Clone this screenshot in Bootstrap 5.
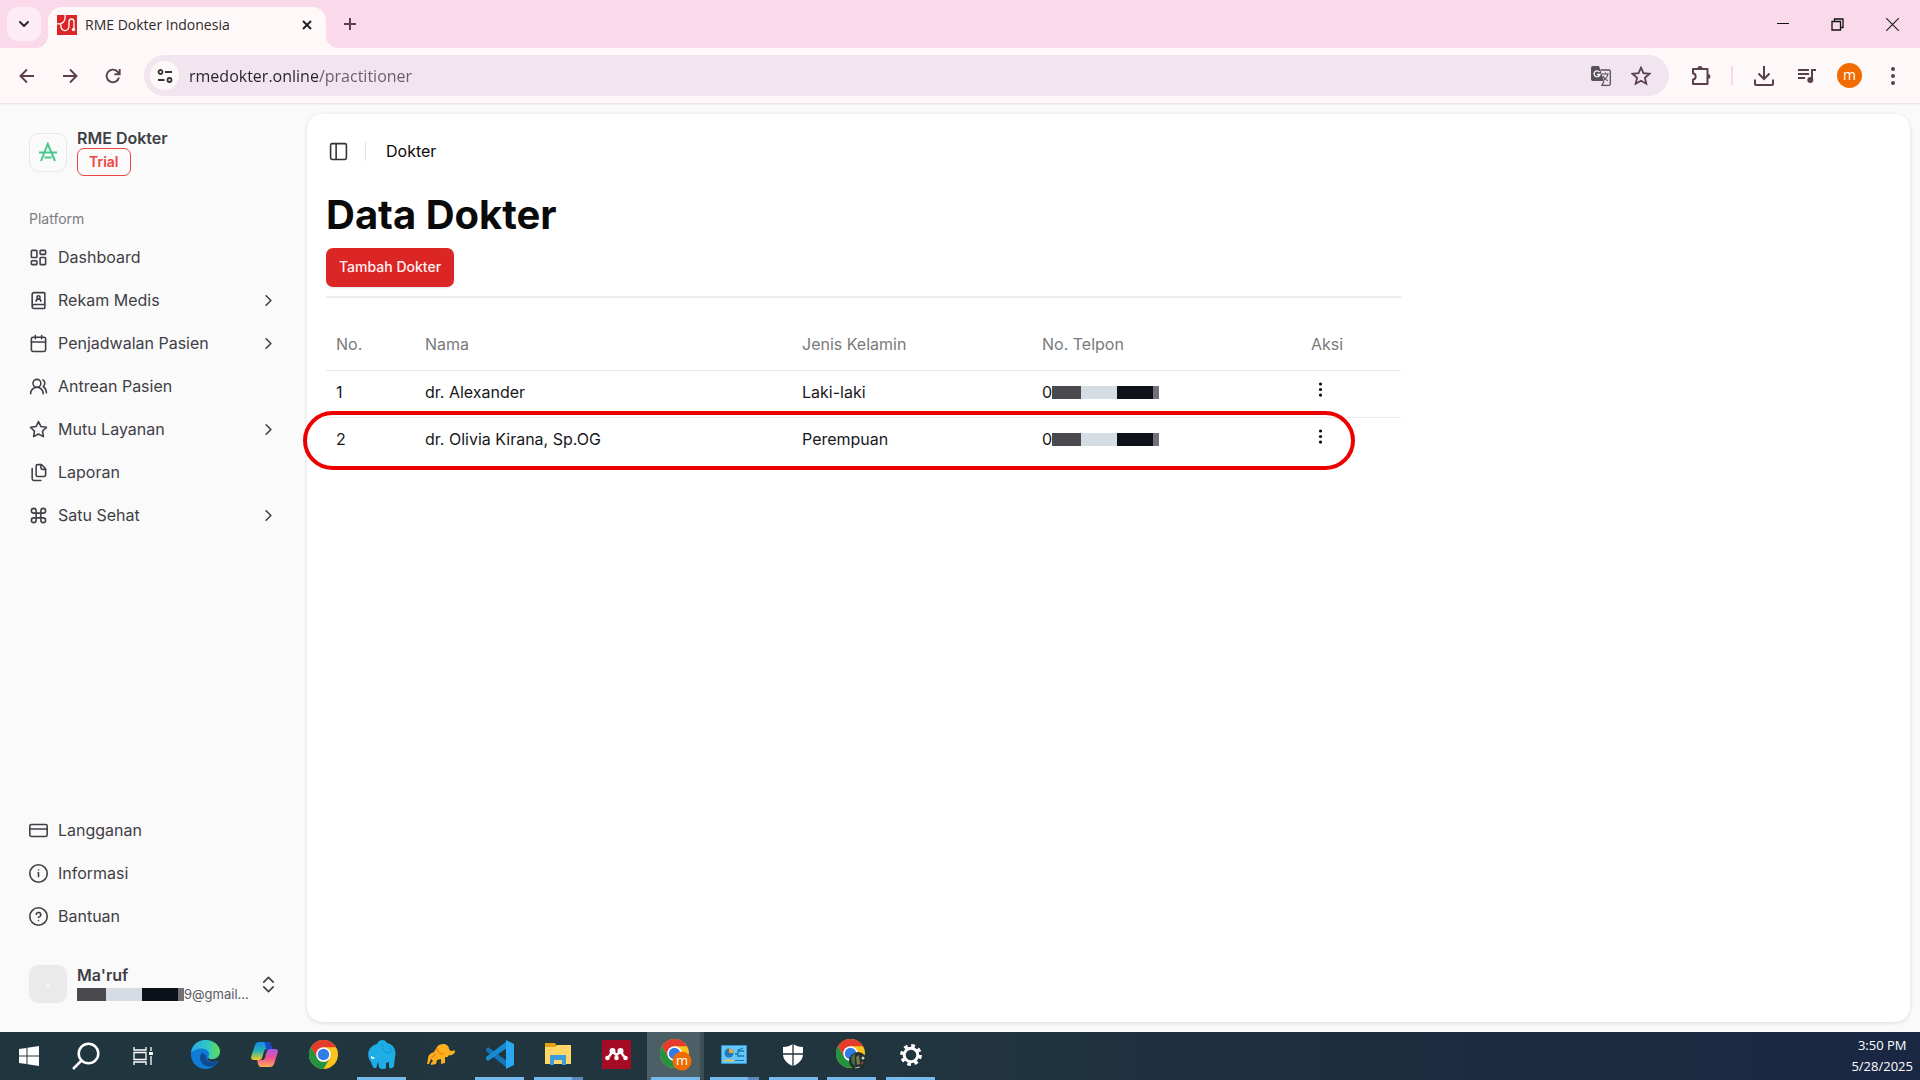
<!DOCTYPE html>
<html lang="id">
<head>
<meta charset="utf-8">
<meta name="viewport" content="width=device-width, initial-scale=1">
<title>RME Dokter Indonesia</title>
<link href="https://cdn.jsdelivr.net/npm/bootstrap@5.3.0/dist/css/bootstrap.min.css" rel="stylesheet">
<style>
  :root { --ui: "Open Sans", "Noto Sans", sans-serif; --app: Inter, "Liberation Sans", sans-serif; --fg: #3f3f46; --plum: #59404f; }
  body { font-family: var(--app); font-size: 16px; line-height: 24px; color: #0a0a0a; background: #fafafa; }
  svg { display: block; flex: none; }
  button { border: 0; background: none; padding: 0; color: inherit; }
  a { color: inherit; text-decoration: none; }
  .ln { fill: none; stroke: currentColor; stroke-width: 2; stroke-linecap: round; stroke-linejoin: round; }

  /* browser window */
  .tabstrip { height: 48px; background: #fadaea; padding: 7px 0 0 7px; color: #2b2b2b; font-family: var(--ui); }
  .tab-search { width: 34px; height: 34px; border-radius: 11px; background: #feecf5; }
  .win-tab { width: 278px; height: 41px; margin-left: 7px; padding: 0 12px 6px 9px; border-radius: 14px 14px 0 0; background: #fff8f8; font-size: 14px; position: relative; }
  .win-tab::before, .win-tab::after { content: ""; position: absolute; bottom: 0; width: 12px; height: 12px; }
  .win-tab::before { left: -12px; background: radial-gradient(circle at 0 0, transparent 12px, #fff8f8 12px); }
  .win-tab::after { right: -12px; background: radial-gradient(circle at 100% 0, transparent 12px, #fff8f8 12px); }
  .win-btn { width: 55px; height: 34px; }
  .toolbar { height: 56px; background: #fff8f8; border-bottom: 1px solid #f1e2ea; color: var(--plum); padding: 0 6px 0 5px; box-shadow: 0 1px 0 #f6f1f4; }
  .tool-btn { width: 43px; height: 40px; color: var(--plum); }
  .omnibox { height: 41px; border-radius: 21px; background: #f1e5ef; padding: 0 14px 0 6px; margin: 0 10px; }
  .site-info { width: 29px; height: 29px; border-radius: 50%; background: #fff8f8; color: #333; }
  .address { border: 0; outline: 0; font: 16px/24px var(--ui); margin-left: 10px; padding: 0; color: transparent; background: linear-gradient(90deg, #28212a 129px, #6b5c68 129px); -webkit-background-clip: text; background-clip: text; }
  .tool-rule { width: 2px; height: 19px; background: #ffd5ea; margin: 0 9px; }
  .profile { width: 25px; height: 25px; border-radius: 50%; background: #f06c00; color: #fff; font: 14px/24px var(--ui); }

  /* application shell */
  .side { width: 307px; padding: 24px 19px 29px; color: var(--fg); }
  .side-row { padding: 0 10px; gap: 10px; }
  .side-link { height: 38px; padding: 0 10px; gap: 10px; color: var(--fg); }
  .side-link:hover { color: #18181b; }
  .side-nav { gap: 5px; }
  .side-foot { margin-bottom: 30px; }
  .logo-box { width: 38px; height: 39px; border: 1px solid #e8e8ea; border-radius: 10px; }
  .trial { border: 1px solid #ef4444; border-radius: 7px; color: #ef4444; font-size: 14px; line-height: 26px; font-weight: 600; padding: 0 11px; }
  .group-title { color: #7c7c82; font-size: 14px; line-height: 38px; padding: 0 10px; margin-top: 24px; }
  .face { width: 38px; height: 38px; border-radius: 10px; background: #eaeaea; color: #f4f4f4; }
  .mail { font-size: 13px; line-height: 18px; color: #5c5c64; }
  .redact { width: 107px; height: 13px; background: linear-gradient(90deg, #4a4a4e 0 27%, #d5dce4 27% 61%, #0d111a 61% 94%, #717177 94%); }
  .sheet { background: #fff; border-radius: 15px; margin: 10px 10px 10px 0; padding: 17px 19px; box-shadow: 0 1px 4px rgba(0,0,0,.13); }
  .crumb-btn { margin-left: 3px; color: #333; }
  .crumb-rule { width: 1px; height: 19px; background: #e5e5e5; margin: 0 20px 0 17px; }
  .page-title { font-size: 40px; line-height: 48px; font-weight: 700; margin: 20px 0 9px; }
  .btn-add { background: #dc2626; color: #fff1f1; font-size: 14px; line-height: 20px; font-weight: 500; border: 0; border-radius: 7px; padding: 9px 13px 10px; box-shadow: 0 1px 2px rgba(0,0,0,.12); }
  .btn-add:hover { background: #c32020; color: #fff; }
  .content { max-width: 1075px; }
  .rule { border-top: 2px solid #ededee; margin: 9px 0 24px; }
  .doctors { table-layout: fixed; font-size: 16px; line-height: 22px; margin: 0; --bs-table-color: #18181b; --bs-table-bg: transparent; }
  .doctors th { font-weight: 400; color: #7a7a7a; height: 48px; padding: 0 10px 3px; border-bottom: 1px solid #e8e8e8; vertical-align: middle; }
  .doctors td { height: 47px; padding: 0 10px 3px; border-bottom: 1px solid #ebebeb; vertical-align: middle; }
  .doctors tr:last-child td { border-bottom: 0; }
  .w-no { width: 89px; } .w-name { width: 377px; } .w-sex { width: 240px; } .w-tel { width: 269px; }
  .ring { position: absolute; left: -23px; right: 46px; bottom: -6px; height: 59px; border: 4px solid #ec0000; border-radius: 30px; pointer-events: none; }

  /* desktop taskbar */
  .taskbar { height: 48px; background: linear-gradient(90deg, #20363e, #21353f 45%, #1c2b40 80%, #1a2743); color: #fff; font-family: var(--ui); gap: 10px; }
  .sys-btn { width: 57px; height: 48px; }
  .apps { width: 754px; }
  .app-btn { width: 49px; height: 48px; border-bottom: 3px solid transparent; position: relative; }
  .running { border-bottom-color: #76b9ed; }
  .stacked::after { content: ""; position: absolute; right: 0; bottom: -3px; width: 11px; height: 3px; background: #5a8db5; }
  .active-app { background: #4c5f66; box-shadow: -4px 0 0 #4c5f66, 4px 0 0 #3c4f57; }
  .clock { font-size: 13px; line-height: 21px; margin-right: 7px; text-align: center; }
</style>
<script src="https://cdn.jsdelivr.net/npm/bootstrap@5.3.0/dist/js/bootstrap.bundle.min.js"></script>
</head>
<body class="vh-100 d-flex flex-column overflow-hidden">

<svg width="0" height="0" class="position-absolute" aria-hidden="true">
  <defs>
    <symbol id="chev" viewBox="0 0 24 24"><path class="ln" d="m9 18 6-6-6-6"/></symbol>
    <symbol id="dots" viewBox="0 0 24 24"><circle cx="12" cy="5" r="2"/><circle cx="12" cy="12" r="2"/><circle cx="12" cy="19" r="2"/></symbol>
    <symbol id="chrome" viewBox="0 0 48 48">
      <circle cx="24" cy="24" r="24" fill="#fcc31e"/>
      <path d="M24 12H44.8A24 24 0 0 0 3.2 12L13.6 30z" fill="#e33b2e"/>
      <path d="M3.2 12A24 24 0 0 0 24 48L34.4 30A12 12 0 0 1 13.6 30z" fill="#229342"/>
      <circle cx="24" cy="24" r="12" fill="#fff"/><circle cx="24" cy="24" r="9.5" fill="#2f7de9"/>
    </symbol>
  </defs>
</svg>

<header>
  <div class="tabstrip d-flex align-items-start">
    <button class="tab-search d-flex align-items-center justify-content-center" aria-label="Search tabs"><svg width="16" height="16" viewBox="0 0 16 16"><path class="ln" d="m4 6 4 4 4-4"/></svg></button>
    <div class="win-tab d-flex align-items-center">
      <svg width="20" height="20" viewBox="0 0 20 20"><path fill="#dc2626" d="M0 0h20v20H0z"/><path d="M0 8.500c5 1.500 9-2 8-8.500M4 8.500c-1 9 8 9 8 2.500V7c0-4 5-4 5 0v6" fill="none" stroke="#fff" stroke-width="1.300"/><circle cx="16.500" cy="14.500" r="1.700" fill="#fff"/></svg>
      <span class="ms-2 me-auto">RME Dokter Indonesia</span>
      <button aria-label="Close tab"><svg width="14" height="14" viewBox="0 0 14 14"><path d="m3 3 8 8m0-8-8 8" stroke="#222" stroke-width="2"/></svg></button>
    </div>
    <button class="mt-2 ms-3" aria-label="New tab"><svg width="16" height="18" viewBox="0 0 16 18"><path d="M8 3v12M2 9h12" stroke="#59404f" stroke-width="2"/></svg></button>
    <div class="ms-auto d-flex text-black">
      <button class="win-btn d-flex align-items-center justify-content-center" aria-label="Minimize"><svg width="12" height="12"><path d="M0 5.500h12" stroke="#111"/></svg></button>
      <button class="win-btn d-flex align-items-center justify-content-center" aria-label="Restore"><svg width="13" height="13" fill="none" stroke="#111" stroke-width="1.300"><path d="M1 3.500h8.500V12H1zM3.500 3.500V1H12v8.500H9.500"/></svg></button>
      <button class="win-btn d-flex align-items-center justify-content-center" aria-label="Close"><svg width="13" height="13"><path d="m0 0 13 13m0-13L0 13" stroke="#222" stroke-width="1.200"/></svg></button>
    </div>
  </div>
  <div class="toolbar d-flex align-items-center">
    <button class="tool-btn d-flex align-items-center justify-content-center" aria-label="Back"><svg width="16" height="16" viewBox="0 0 16 16" fill="none" stroke="currentColor" stroke-width="1.900"><path d="M15 8H2M8 1.500 1.500 8 8 14.500"/></svg></button>
    <button class="tool-btn d-flex align-items-center justify-content-center" aria-label="Forward"><svg width="16" height="16" viewBox="0 0 16 16" fill="none" stroke="currentColor" stroke-width="1.900"><path d="M1 8h13M8 1.500 14.500 8 8 14.500"/></svg></button>
    <button class="tool-btn d-flex align-items-center justify-content-center" aria-label="Reload"><svg width="16" height="16" viewBox="0 0 16 16" fill="none" stroke="currentColor" stroke-width="1.900"><path d="M14 9.500A6.300 6.300 0 1 1 12.500 3.600L14.500 6M14.700 1v5.300H9.500"/></svg></button>
    <div class="omnibox d-flex align-items-center flex-grow-1">
      <button class="site-info d-flex align-items-center justify-content-center" aria-label="Site information"><svg width="16" height="16" viewBox="0 0 16 16" fill="none" stroke="currentColor" stroke-width="1.800"><circle cx="3.500" cy="4" r="2"/><path d="M8 4h7M1 12h6.500"/><circle cx="12.500" cy="12" r="2"/></svg></button>
      <input class="address flex-grow-1" type="text" aria-label="Address" value="rmedokter.online/practitioner">
      <button class="me-3" aria-label="Translate"><svg width="20" height="20" viewBox="0 0 20 20"><path d="M2 0h6l5 15H2a2 2 0 0 1-2-2V2a2 2 0 0 1 2-2z" fill="#59505a"/><path d="M8.500 6A3 3 0 1 0 9 8.500H6" fill="none" stroke="#fff" stroke-width="1.300"/><path d="M9.500 4H18a1.300 1.300 0 0 1 1.300 1.300V18a1.300 1.300 0 0 1-1.300 1.300h-7l2-4" fill="none" stroke="#59505a" stroke-width="1.300"/><path d="M11 8h7m-3.500-1.500V8m2 0c0 3-2 5-3.500 6m-1-4c1 2 3 4 5 4.500" fill="none" stroke="#59505a" stroke-width="1.100"/></svg></button>
      <button class="mx-1" aria-label="Bookmark"><svg width="20" height="20" viewBox="0 0 18 18"><path d="m9 1.500 2.200 5 5.500.5-4.200 3.600 1.300 5.400L9 13.200 4.200 16l1.300-5.400L1.300 7l5.500-.5z" fill="none" stroke="#59404f" stroke-width="1.600"/></svg></button>
    </div>
    <button class="tool-btn d-flex align-items-center justify-content-center" aria-label="Extensions"><svg width="22" height="22" viewBox="0 0 22 22"><path d="M3 4h14.500v15H3v-4.500c3.500 0 3.500-6 0-6z" fill="none" stroke="currentColor" stroke-width="2" stroke-linejoin="round"/><path d="M7.500 3.500a2.500 2.500 0 0 1 5 0M18 9a2.500 2.500 0 0 1 0 5" fill="currentColor"/></svg></button>
    <span class="tool-rule"></span>
    <button class="tool-btn d-flex align-items-center justify-content-center" aria-label="Downloads"><svg width="20" height="20" viewBox="0 0 20 20" fill="none" stroke="currentColor" stroke-width="2"><path d="M10 0v12.500M4.500 7.500l5.500 5.500 5.500-5.500M1 13.500V18a1 1 0 0 0 1 1h16a1 1 0 0 0 1-1v-4.500"/></svg></button>
    <button class="tool-btn d-flex align-items-center justify-content-center" aria-label="Media controls"><svg width="20" height="16" viewBox="0 0 20 16"><path d="M1 2h11M1 6h11M1 10h7M15 12V2h4" fill="none" stroke="currentColor" stroke-width="2"/><circle cx="13.300" cy="12" r="3" fill="currentColor"/></svg></button>
    <button class="tool-btn d-flex align-items-center justify-content-center" aria-label="Profile"><span class="profile">m</span></button>
    <button class="tool-btn d-flex align-items-center justify-content-center" aria-label="Menu"><svg width="24" height="24" fill="currentColor"><use href="#dots"/></svg></button>
  </div>
</header>

<div class="d-flex flex-grow-1 overflow-hidden">
  <aside class="side d-flex flex-column flex-shrink-0">
    <div class="side-row d-flex align-items-center">
      <div class="logo-box d-flex align-items-center justify-content-center"><svg width="18" height="20" viewBox="0 0 18 20" fill="none" stroke="#48c78e" stroke-width="2"><path d="m2 19 6.800-17L16 19M0 10.500h18M5.500 15.500h7"/></svg></div>
      <div><div class="fw-semibold lh-sm">RME Dokter</div><span class="trial d-inline-block">Trial</span></div>
    </div>
    <div class="group-title">Platform</div>
    <nav class="side-nav nav flex-column flex-nowrap">
      <a class="side-link d-flex align-items-center" href="#"><svg class="ln" width="19" height="19" viewBox="0 0 24 24"><rect width="7" height="9" x="3" y="3" rx="1"/><rect width="7" height="5" x="14" y="3" rx="1"/><rect width="7" height="9" x="14" y="12" rx="1"/><rect width="7" height="5" x="3" y="16" rx="1"/></svg>Dashboard</a>
      <a class="side-link d-flex align-items-center" href="#"><svg class="ln" width="19" height="19" viewBox="0 0 24 24"><path d="M15 13a3 3 0 1 0-6 0"/><path d="M4 19.500v-15A2.500 2.500 0 0 1 6.500 2H19a1 1 0 0 1 1 1v18a1 1 0 0 1-1 1H6.500a1 1 0 0 1 0-5H20"/><circle cx="12" cy="8" r="2"/></svg>Rekam Medis<svg class="ms-auto" width="19" height="19"><use href="#chev"/></svg></a>
      <a class="side-link d-flex align-items-center" href="#"><svg class="ln" width="19" height="19" viewBox="0 0 24 24"><path d="M8 2v4M16 2v4M3 10h18"/><rect width="18" height="18" x="3" y="4" rx="2"/></svg>Penjadwalan Pasien<svg class="ms-auto" width="19" height="19"><use href="#chev"/></svg></a>
      <a class="side-link d-flex align-items-center" href="#"><svg class="ln" width="19" height="19" viewBox="0 0 24 24"><path d="M18 21a8 8 0 0 0-16 0"/><circle cx="10" cy="8" r="5"/><path d="M22 20c0-3.370-2-6.500-4-8a5 5 0 0 0-.45-8.300"/></svg>Antrean Pasien</a>
      <a class="side-link d-flex align-items-center" href="#"><svg class="ln" width="19" height="19" viewBox="0 0 24 24"><path d="m12 2 3.090 6.260L22 9.270l-5 4.870 1.180 6.880L12 17.770l-6.180 3.250L7 14.140 2 9.270l6.910-1.010z"/></svg>Mutu Layanan<svg class="ms-auto" width="19" height="19"><use href="#chev"/></svg></a>
      <a class="side-link d-flex align-items-center" href="#"><svg class="ln" width="19" height="19" viewBox="0 0 24 24"><path d="M15 2a2 2 0 0 1 1.414.586l4 4A2 2 0 0 1 21 8v7a2 2 0 0 1-2 2h-8a2 2 0 0 1-2-2V4a2 2 0 0 1 2-2z"/><path d="M15 2v4a2 2 0 0 0 2 2h4M4 7v13a2 2 0 0 0 2 2h9"/></svg>Laporan</a>
      <a class="side-link d-flex align-items-center" href="#"><svg class="ln" width="19" height="19" viewBox="0 0 24 24"><path d="M15 6v12a3 3 0 1 0 3-3H6a3 3 0 1 0 3 3V6a3 3 0 1 0-3 3h12a3 3 0 1 0-3-3"/></svg>Satu Sehat<svg class="ms-auto" width="19" height="19"><use href="#chev"/></svg></a>
    </nav>
    <nav class="side-nav side-foot nav flex-column flex-nowrap mt-auto">
      <a class="side-link d-flex align-items-center" href="#"><svg class="ln" width="19" height="19" viewBox="0 0 24 24"><rect width="22" height="15" x="1" y="4.500" rx="2"/><path d="M1 10h22"/></svg>Langganan</a>
      <a class="side-link d-flex align-items-center" href="#"><svg class="ln" width="19" height="19" viewBox="0 0 24 24"><circle cx="12" cy="12" r="11"/><path d="M11.500 11H12v5m0-8.500v.1"/></svg>Informasi</a>
      <a class="side-link d-flex align-items-center" href="#"><svg class="ln" width="19" height="19" viewBox="0 0 24 24"><circle cx="12" cy="12" r="11"/><path d="M9.090 9a3 3 0 0 1 5.830 1c0 2-3 3-3 3M12 17h.01"/></svg>Bantuan</a>
    </nav>
    <button class="side-row d-flex align-items-center text-start" aria-label="Akun">
      <span class="face d-flex align-items-center justify-content-center">•</span>
      <span><span class="d-block fw-semibold lh-sm">Ma'ruf</span><span class="mail d-flex align-items-center"><span class="redact"></span>9@gmail...</span></span>
      <svg class="ln ms-auto" width="19" height="19" viewBox="0 0 24 24"><path d="m6 15 6 6 6-6M6 9l6-6 6 6"/></svg>
    </button>
  </aside>

  <main class="sheet flex-grow-1">
    <div class="d-flex align-items-center py-2">
      <button class="crumb-btn" aria-label="Toggle sidebar"><svg class="ln" width="19" height="19" viewBox="0 0 24 24"><rect width="20" height="20" x="2" y="2" rx="2"/><path d="M9 2v20"/></svg></button>
      <span class="crumb-rule"></span><span>Dokter</span>
    </div>
    <div class="content">
      <h1 class="page-title">Data Dokter</h1>
      <button class="btn btn-add">Tambah Dokter</button>
      <div class="rule"></div>
      <div class="position-relative">
        <table class="doctors table">
          <thead><tr><th class="w-no">No.</th><th class="w-name">Nama</th><th class="w-sex">Jenis Kelamin</th><th class="w-tel">No. Telpon</th><th>Aksi</th></tr></thead>
          <tbody>
            <tr><td>1</td><td>dr. Alexander</td><td>Laki-laki</td><td><div class="d-flex align-items-center">0<span class="redact"></span></div></td><td><button aria-label="Aksi dr. Alexander"><svg width="19" height="19" fill="#0a0a0a"><use href="#dots"/></svg></button></td></tr>
            <tr><td>2</td><td>dr. Olivia Kirana, Sp.OG</td><td>Perempuan</td><td><div class="d-flex align-items-center">0<span class="redact"></span></div></td><td><button aria-label="Aksi dr. Olivia Kirana"><svg width="19" height="19" fill="#0a0a0a"><use href="#dots"/></svg></button></td></tr>
          </tbody>
        </table>
        <div class="ring"></div>
      </div>
    </div>
  </main>
</div>

<footer class="taskbar d-flex align-items-center flex-shrink-0">
  <div class="d-flex">
    <button class="sys-btn d-flex align-items-center justify-content-center" aria-label="Start"><svg width="20" height="20" viewBox="0 0 20 20" fill="#fff"><path d="m0 3 7.500-1v7.500H0zM8.500 1.800 20 0v9.500H8.500zM0 10.500h7.500V18L0 17zM8.500 10.500H20V20L8.500 18.200z"/></svg></button>
    <button class="sys-btn d-flex align-items-center justify-content-center" aria-label="Search"><svg width="28" height="28" viewBox="0 0 28 28" fill="none" stroke="#fff" stroke-width="2.500"><circle cx="16.500" cy="11.500" r="9.800"/><path d="M9.500 18.500 1 27"/></svg></button>
    <button class="sys-btn d-flex align-items-center justify-content-center" aria-label="Task view"><svg width="20" height="18" viewBox="0 0 20 18" fill="none" stroke="#fff" stroke-width="1.300"><path d="M1 0v3h12V0M1 18v-3h12v3M1 5.500h12v7H1zM18 0v4M18 9v9"/><path d="M16 5h4v3h-4z" fill="#fff" stroke="none"/></svg></button>
  </div>
  <div class="apps d-flex justify-content-between">
    <button class="app-btn d-flex align-items-center justify-content-center" aria-label="Edge"><svg width="29" height="29" viewBox="0 0 30 30"><defs><linearGradient id="eg" x2="1"><stop stop-color="#2aa8ef"/><stop offset=".55" stop-color="#2fc7c4"/><stop offset="1" stop-color="#61de52"/></linearGradient></defs><circle cx="15" cy="15" r="15" fill="#0f7cd8"/><path d="M0 13C1 5 7 0 15 0c9 0 15 6 15 12 0 5-4 8-8 8-3 0-5-1-4-3 4-6-7-13-18-4z" fill="url(#eg)"/><path d="M11 13c-5 8 2 17 12 14 2-1 4-3 5-5-6 3-14 0-12-6-2-1-3-2-5-3z" fill="#114a91"/><path d="M18 17c-1 2 1 3 4 3 4 0 7-3 8-6v7l-3 1c-6 2-12-1-9-5z" fill="#21363e"/></svg></button>
    <button class="app-btn d-flex align-items-center justify-content-center" aria-label="Copilot"><svg width="27" height="25" viewBox="0 0 27 25"><defs><linearGradient id="ca" x2="0" y2="1"><stop stop-color="#1489e8"/><stop offset=".5" stop-color="#26b2b0"/><stop offset="1" stop-color="#f5cb22"/></linearGradient><linearGradient id="cb" x2="0" y2="1"><stop stop-color="#a45bef"/><stop offset=".5" stop-color="#f0508f"/><stop offset="1" stop-color="#ffad58"/></linearGradient></defs><path d="M8 0h9c3 0 3 4 4 7h-5c-3 0-3 3-4 6s-1 5-5 5H3c-4 0-3-3-2-6L4 3c1-2 2-3 4-3z" fill="url(#ca)"/><path d="M13 0h4c3 0 3 4 4 7h-5c-2-1-1-6-3-7z" fill="#1747c9"/><path d="M19 25h-9c-3 0-3-4-4-7h5c3 0 3-3 4-6s1-5 5-5h4c4 0 3 3 2 6l-3 9c-1 2-2 3-4 3z" fill="url(#cb)"/></svg></button>
    <button class="app-btn d-flex align-items-center justify-content-center" aria-label="Chrome"><svg width="29" height="29"><use href="#chrome"/></svg></button>
    <button class="app-btn running d-flex align-items-center justify-content-center" aria-label="Laragon"><svg width="28" height="29" viewBox="0 0 28 29"><path d="M9 4c2-5 8-5 10-1 6 1 10 7 8 14l-1 9c-1 3-5 3-5 1v-6c-1 2-2 2-3 2v5c-2 2-7 1-7-1l-1-5c-1 2-1 5-2 6-3 1-4-3-5-6-4-4-5-15 6-18z" fill="#1eaee5"/><path d="M14 4c1 6 2 9 6 9 3 0 4-4 2-7" fill="none" stroke="#0f90ca"/><path d="m3 16 4 2-2 1-2-1z" fill="#fff"/></svg></button>
    <button class="app-btn d-flex align-items-center justify-content-center" aria-label="DBeaver"><svg width="28" height="21" viewBox="0 0 28 21"><path d="M10 3c4-5 12-3 12 2 2 3 4 2 5 1l1 1c0 3-4 5-6 4-1 3-3 2-4 2v6l-4 1v-5l-4 1-1 4-5 1v-2l2-2-2-2-2 5H0l1-5c0-5 4-6 6-7z" fill="#ffb01f"/><path d="M10 4c0 5 3 6 7 6M4 14l5-4" fill="none" stroke="#f38316" stroke-width="1.500"/></svg></button>
    <button class="app-btn running d-flex align-items-center justify-content-center" aria-label="Visual Studio Code"><svg width="29" height="29" viewBox="0 0 29 29"><path d="M1 9 3 7l19 14v7L1 11z" fill="#1176b8"/><path d="m1 19 2 2L22 8V1L1 17z" fill="#168bd2"/><path d="m21 0 8 4v21l-8 4z" fill="#2ba8f2"/></svg></button>
    <button class="app-btn running stacked d-flex align-items-center justify-content-center" aria-label="File Explorer"><svg width="26" height="23" viewBox="0 0 26 23"><path d="M0 0h10l2 3h13v8H0z" fill="#e5a20b"/><path d="M0 4h10l2-2h14v19H0z" fill="#ffd766"/><path d="M5 22V12h16v10h-4v-5H9v5z" fill="#3e9bdc"/></svg></button>
    <button class="app-btn d-flex align-items-center justify-content-center" aria-label="Mendeley"><svg width="29" height="29" viewBox="0 0 29 29"><path fill="#a50b25" d="M0 0h29v29H0z"/><g fill="#fff"><circle cx="5.500" cy="18" r="2.300"/><circle cx="23.500" cy="18" r="2.300"/><circle cx="14.500" cy="18" r="2.300"/><circle cx="10.500" cy="11" r="3"/><circle cx="18.500" cy="11" r="3"/></g><path d="m7 16.500 3.500-5 4 3.500 4-3.500 3.500 5" stroke="#fff" stroke-width="2.500" fill="none"/></svg></button>
    <button class="app-btn running active-app d-flex align-items-center justify-content-center" aria-label="Chrome, m"><svg width="32" height="32" viewBox="0 0 32 32"><use href="#chrome" width="29" height="29"/><circle cx="22" cy="22" r="9.500" fill="#f06c00"/><text x="22" y="26" text-anchor="middle" font-size="13" fill="#fff">m</text></svg></button>
    <button class="app-btn running stacked d-flex align-items-center justify-content-center" aria-label="Control Panel"><svg width="26" height="19" viewBox="0 0 26 19"><path fill="#65c7f5" stroke="#3294d1" d="M.5.500h25v18H.500z"/><circle cx="8" cy="8" r="4.500" fill="#2277b9"/><path d="M8 8V3.500A4.500 4.500 0 0 1 12.500 8z" fill="#f6a329"/><path d="M14 9h3V6h6M17 5l5-2M16 11h7" stroke="#1976b5" stroke-width="1.300" fill="none"/><path d="M3 15.500h10" stroke="#f6bf40" stroke-width="1.500"/><path d="M14 15.500h9" stroke="#1976b5"/></svg></button>
    <button class="app-btn running d-flex align-items-center justify-content-center" aria-label="Windows Security"><svg width="20" height="22" viewBox="0 0 20 22"><path d="M10 0c3 2 6 3 10 3v7c0 6-5 10-10 12C5 20 0 16 0 10V3c4 0 7-1 10-3z" fill="#fff"/><path d="M10 0v22M0 10h20" stroke="#21343f" stroke-width="1.300"/></svg></button>
    <button class="app-btn running d-flex align-items-center justify-content-center" aria-label="Chrome, second profile"><svg width="32" height="32" viewBox="0 0 32 32"><use href="#chrome" width="29" height="29"/><circle cx="22" cy="22" r="9" fill="#22302f"/><path d="m15 18 4-4v13l-3-3z" fill="#4e6b49"/><path d="m20 18 3-2 1 9-3 1z" fill="#7a7a4c"/><circle cx="27" cy="19" r="1.500" fill="#c9d6d0"/><circle cx="26" cy="24" r="1.500" fill="#7c4540"/><path d="m19 29 5-1" stroke="#b9c9c4"/></svg></button>
    <button class="app-btn running d-flex align-items-center justify-content-center" aria-label="Settings"><svg width="22" height="22" viewBox="0 0 22 22" fill="none" stroke="#fff"><circle cx="11" cy="11" r="6.800" stroke-width="3"/><circle cx="11" cy="11" r="9.300" stroke-width="3.200" stroke-dasharray="3.650 3.650"/></svg></button>
  </div>
  <div class="clock ms-auto"><div>3:50 PM</div><div>5/28/2025</div></div>
</footer>
</body>
</html>
